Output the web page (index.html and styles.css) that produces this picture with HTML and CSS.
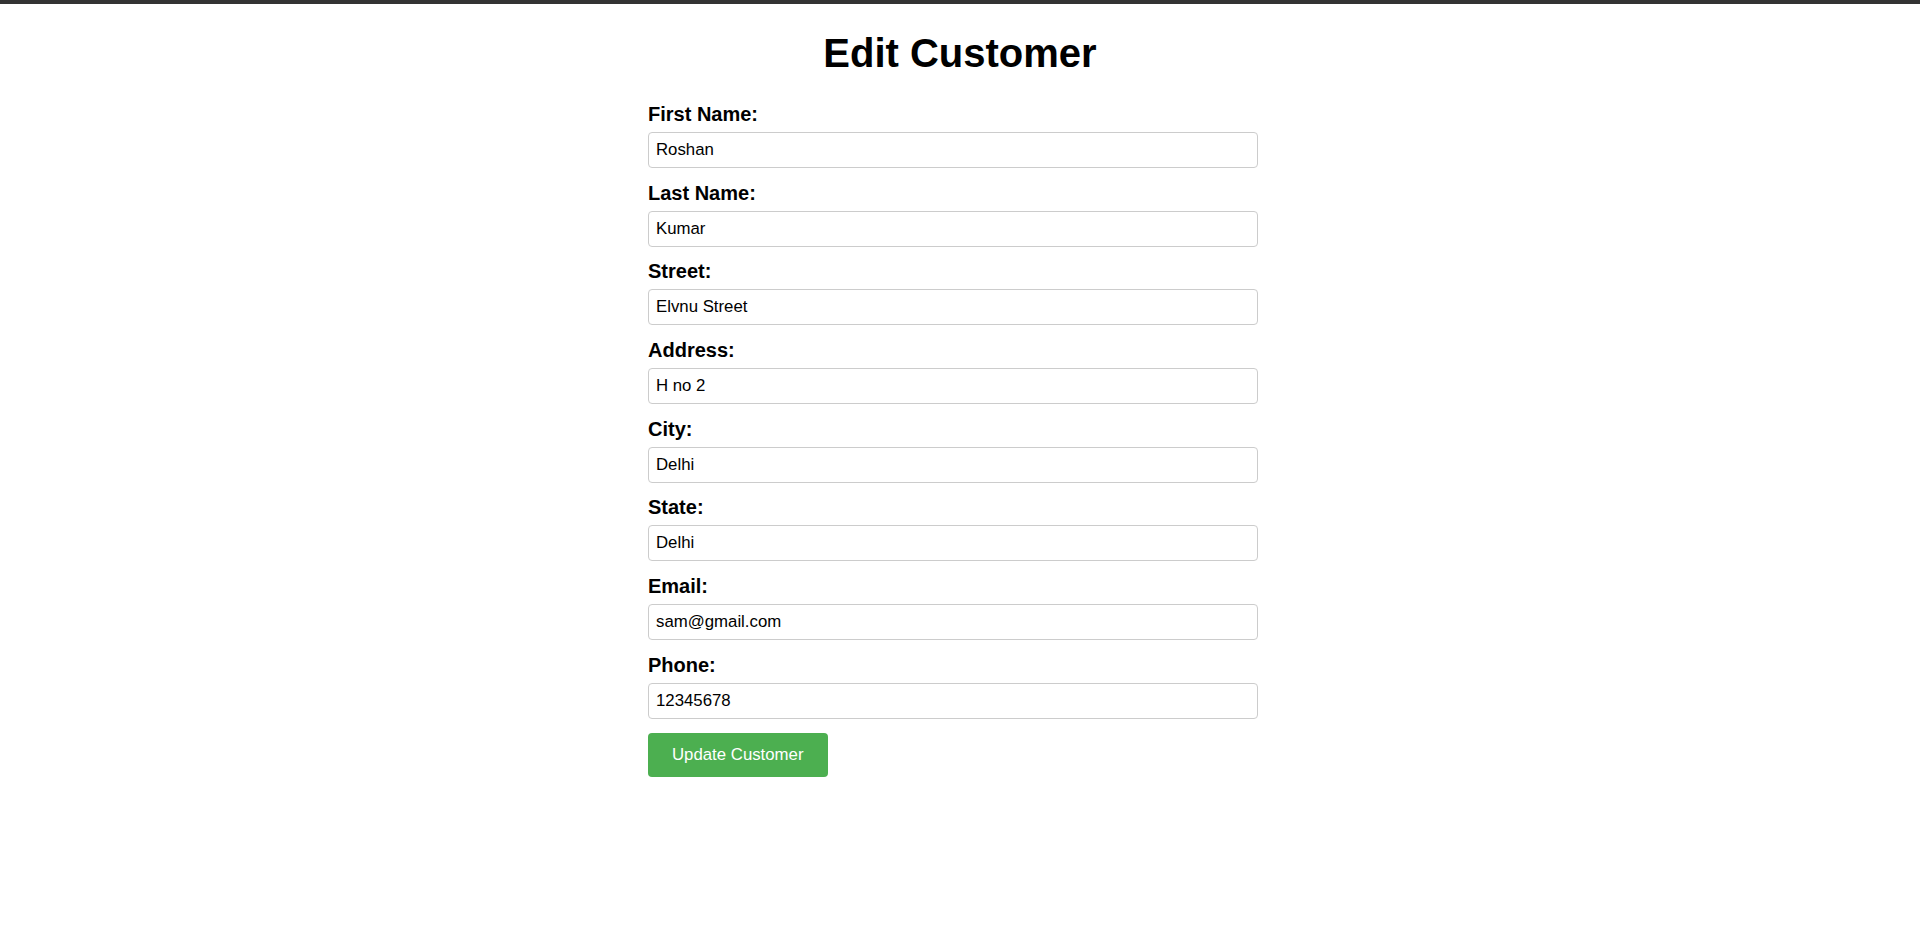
FILE: index.html
```html
<!DOCTYPE html>
<html lang="en">
<head>
<meta charset="utf-8">
<title>Edit Customer</title>
<link rel="stylesheet" href="styles.css">
</head>
<body>
<div class="topbar"></div>
<main class="page">
  <h1 class="title">Edit Customer</h1>
  <form class="form">
    <label class="label" for="fn">First Name:</label>
    <input class="input" id="fn" type="text" value="Roshan">
    <label class="label" for="ln">Last Name:</label>
    <input class="input" id="ln" type="text" value="Kumar">
    <label class="label" for="st">Street:</label>
    <input class="input" id="st" type="text" value="Elvnu Street">
    <label class="label" for="ad">Address:</label>
    <input class="input" id="ad" type="text" value="H no 2">
    <label class="label" for="ci">City:</label>
    <input class="input" id="ci" type="text" value="Delhi">
    <label class="label" for="sa">State:</label>
    <input class="input" id="sa" type="text" value="Delhi">
    <label class="label" for="em">Email:</label>
    <input class="input" id="em" type="text" value="sam@gmail.com">
    <label class="label" for="ph">Phone:</label>
    <input class="input" id="ph" type="text" value="12345678">
    <button class="btn" type="button">Update Customer</button>
  </form>
</main>
</body>
</html>
```
FILE: styles.css
```css
html, body {
  margin: 0;
  padding: 0;
  background: #ffffff;
  font-family: "Liberation Sans", Arial, sans-serif;
  color: #000;
}
.topbar {
  height: 4px;
  background: #333333;
}
.page {
  display: flex;
  flex-direction: column;
  align-items: center;
}
.title {
  margin: 26px 0 27px;
  font-size: 40px;
  line-height: 46px;
  font-weight: bold;
  text-align: center;
}
.form {
  width: 624px;
  display: flex;
  flex-direction: column;
  align-items: flex-start;
}
.label {
  display: block;
  font-size: 20px;
  font-weight: bold;
  line-height: 22px;
  margin-bottom: 7px;
}
.input {
  box-sizing: border-box;
  width: 610px;
  height: 36px;
  padding: 0 7px;
  margin: 0 0 13.7px;
  border: 1px solid #cccccc;
  border-radius: 4px;
  font-family: "Liberation Sans", Arial, sans-serif;
  font-size: 16.8px;
  color: #000;
  background: #fff;
  outline: none;
}
.btn {
  height: 44px;
  padding: 0 24px;
  background: #4caf50;
  color: #ffffff;
  border: none;
  border-radius: 4px;
  font-family: "Liberation Sans", Arial, sans-serif;
  font-size: 16.8px;
  cursor: pointer;
}
```
